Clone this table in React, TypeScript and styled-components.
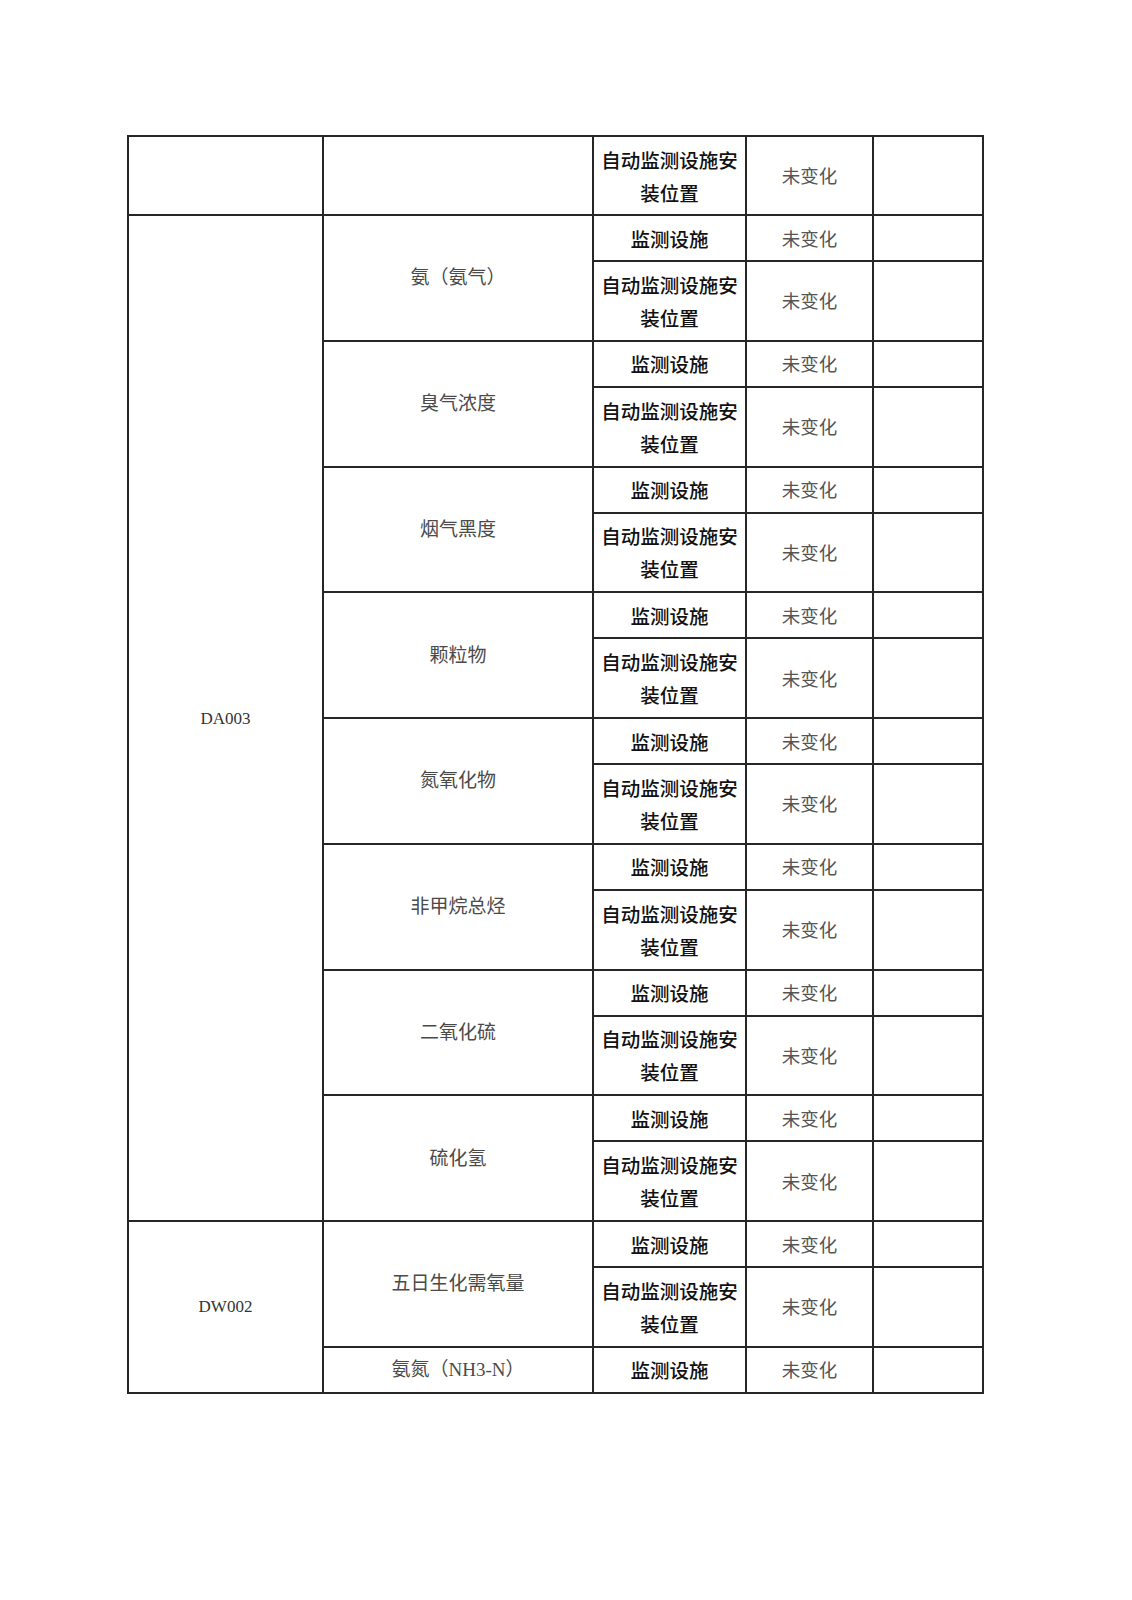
import React from 'react';
import styled, { createGlobalStyle } from 'styled-components';

const GlobalStyle = createGlobalStyle`
  html, body {
    margin: 0;
    padding: 0;
    background: #ffffff;
  }
`;

type Kind = 'code' | 'item' | 'facility' | 'status' | 'blank';

interface Group {
  item: string;
  facilities: string[];
}

interface Outlet {
  code: string;
  groups: Group[];
}

const BOTH = ['监测设施', '自动监测设施安装位置'];

const OUTLETS: Outlet[] = [
  {
    code: 'DA003',
    groups: [
      { item: '氨（氨气）', facilities: BOTH },
      { item: '臭气浓度', facilities: BOTH },
      { item: '烟气黑度', facilities: BOTH },
      { item: '颗粒物', facilities: BOTH },
      { item: '氮氧化物', facilities: BOTH },
      { item: '非甲烷总烃', facilities: BOTH },
      { item: '二氧化硫', facilities: BOTH },
      { item: '硫化氢', facilities: BOTH },
    ],
  },
  {
    code: 'DW002',
    groups: [
      { item: '五日生化需氧量', facilities: BOTH },
      { item: '氨氮（NH3-N）', facilities: ['监测设施'] },
    ],
  },
];

const Page = styled.div`
  width: 1132px;
  min-height: 1600px;
  box-sizing: border-box;
  padding: 135px 0 0 127px;
`;

const Sheet = styled.table`
  border-collapse: collapse;
  table-layout: fixed;
  width: 855px;
  border: 2px solid #262626;
`;

const Row = styled.tr<{ $tall?: boolean; $first?: boolean }>`
  height: ${({ $tall, $first }) => ($first ? '79px' : $tall ? '79.75px' : '46px')};
`;

const fontFor = (kind: Kind) => {
  switch (kind) {
    case 'code':
      return `font-family: "Liberation Serif", "Noto Sans CJK SC", serif; font-size: 17px; color: #333;`;
    case 'item':
      return `font-family: "Liberation Serif", "Noto Sans CJK SC", serif; font-size: 19px; color: #4a4a4a; font-weight: 400;`;
    case 'facility':
      return `font-family: "Noto Sans CJK SC", "Noto Sans", sans-serif; font-size: 19.5px; color: #111; font-weight: 500;`;
    case 'status':
      return `font-family: "Noto Sans CJK SC", "Noto Sans", sans-serif; font-size: 18.5px; color: #555; font-weight: 400;`;
    default:
      return '';
  }
};

const Cell = styled.td<{ $kind: Kind }>`
  border: 2px solid #262626;
  padding: 0;
  text-align: center;
  vertical-align: middle;
  white-space: nowrap;
  line-height: 33px;
  ${({ $kind }) => fontFor($kind)}
`;

const Col = styled.col<{ $w: number }>`
  width: ${({ $w }) => $w}px;
`;

function FacilityText({ name }: { name: string }) {
  if (name === '自动监测设施安装位置') {
    return (
      <>
        自动监测设施安
        <br />
        装位置
      </>
    );
  }
  return <>{name}</>;
}

export default function App() {
  const rows: React.ReactNode[] = [];

  rows.push(
    <Row key="head" $first>
      <Cell $kind="blank" />
      <Cell $kind="blank" />
      <Cell $kind="facility">
        <FacilityText name="自动监测设施安装位置" />
      </Cell>
      <Cell $kind="status">未变化</Cell>
      <Cell $kind="blank" />
    </Row>
  );

  OUTLETS.forEach((outlet) => {
    const span = outlet.groups.reduce((n, g) => n + g.facilities.length, 0);
    outlet.groups.forEach((group, gi) => {
      group.facilities.forEach((fac, fi) => {
        rows.push(
          <Row key={`${outlet.code}-${gi}-${fi}`} $tall={fac !== '监测设施'}>
            {gi === 0 && fi === 0 && (
              <Cell $kind="code" rowSpan={span}>
                {outlet.code}
              </Cell>
            )}
            {fi === 0 && (
              <Cell $kind="item" rowSpan={group.facilities.length}>
                {group.item}
              </Cell>
            )}
            <Cell $kind="facility">
              <FacilityText name={fac} />
            </Cell>
            <Cell $kind="status">未变化</Cell>
            <Cell $kind="blank" />
          </Row>
        );
      });
    });
  });

  return (
    <>
      <GlobalStyle />
      <Page>
        <Sheet>
          <colgroup>
            <Col $w={195} />
            <Col $w={270} />
            <Col $w={153} />
            <Col $w={127} />
            <Col $w={110} />
          </colgroup>
          <tbody>{rows}</tbody>
        </Sheet>
      </Page>
    </>
  );
}
